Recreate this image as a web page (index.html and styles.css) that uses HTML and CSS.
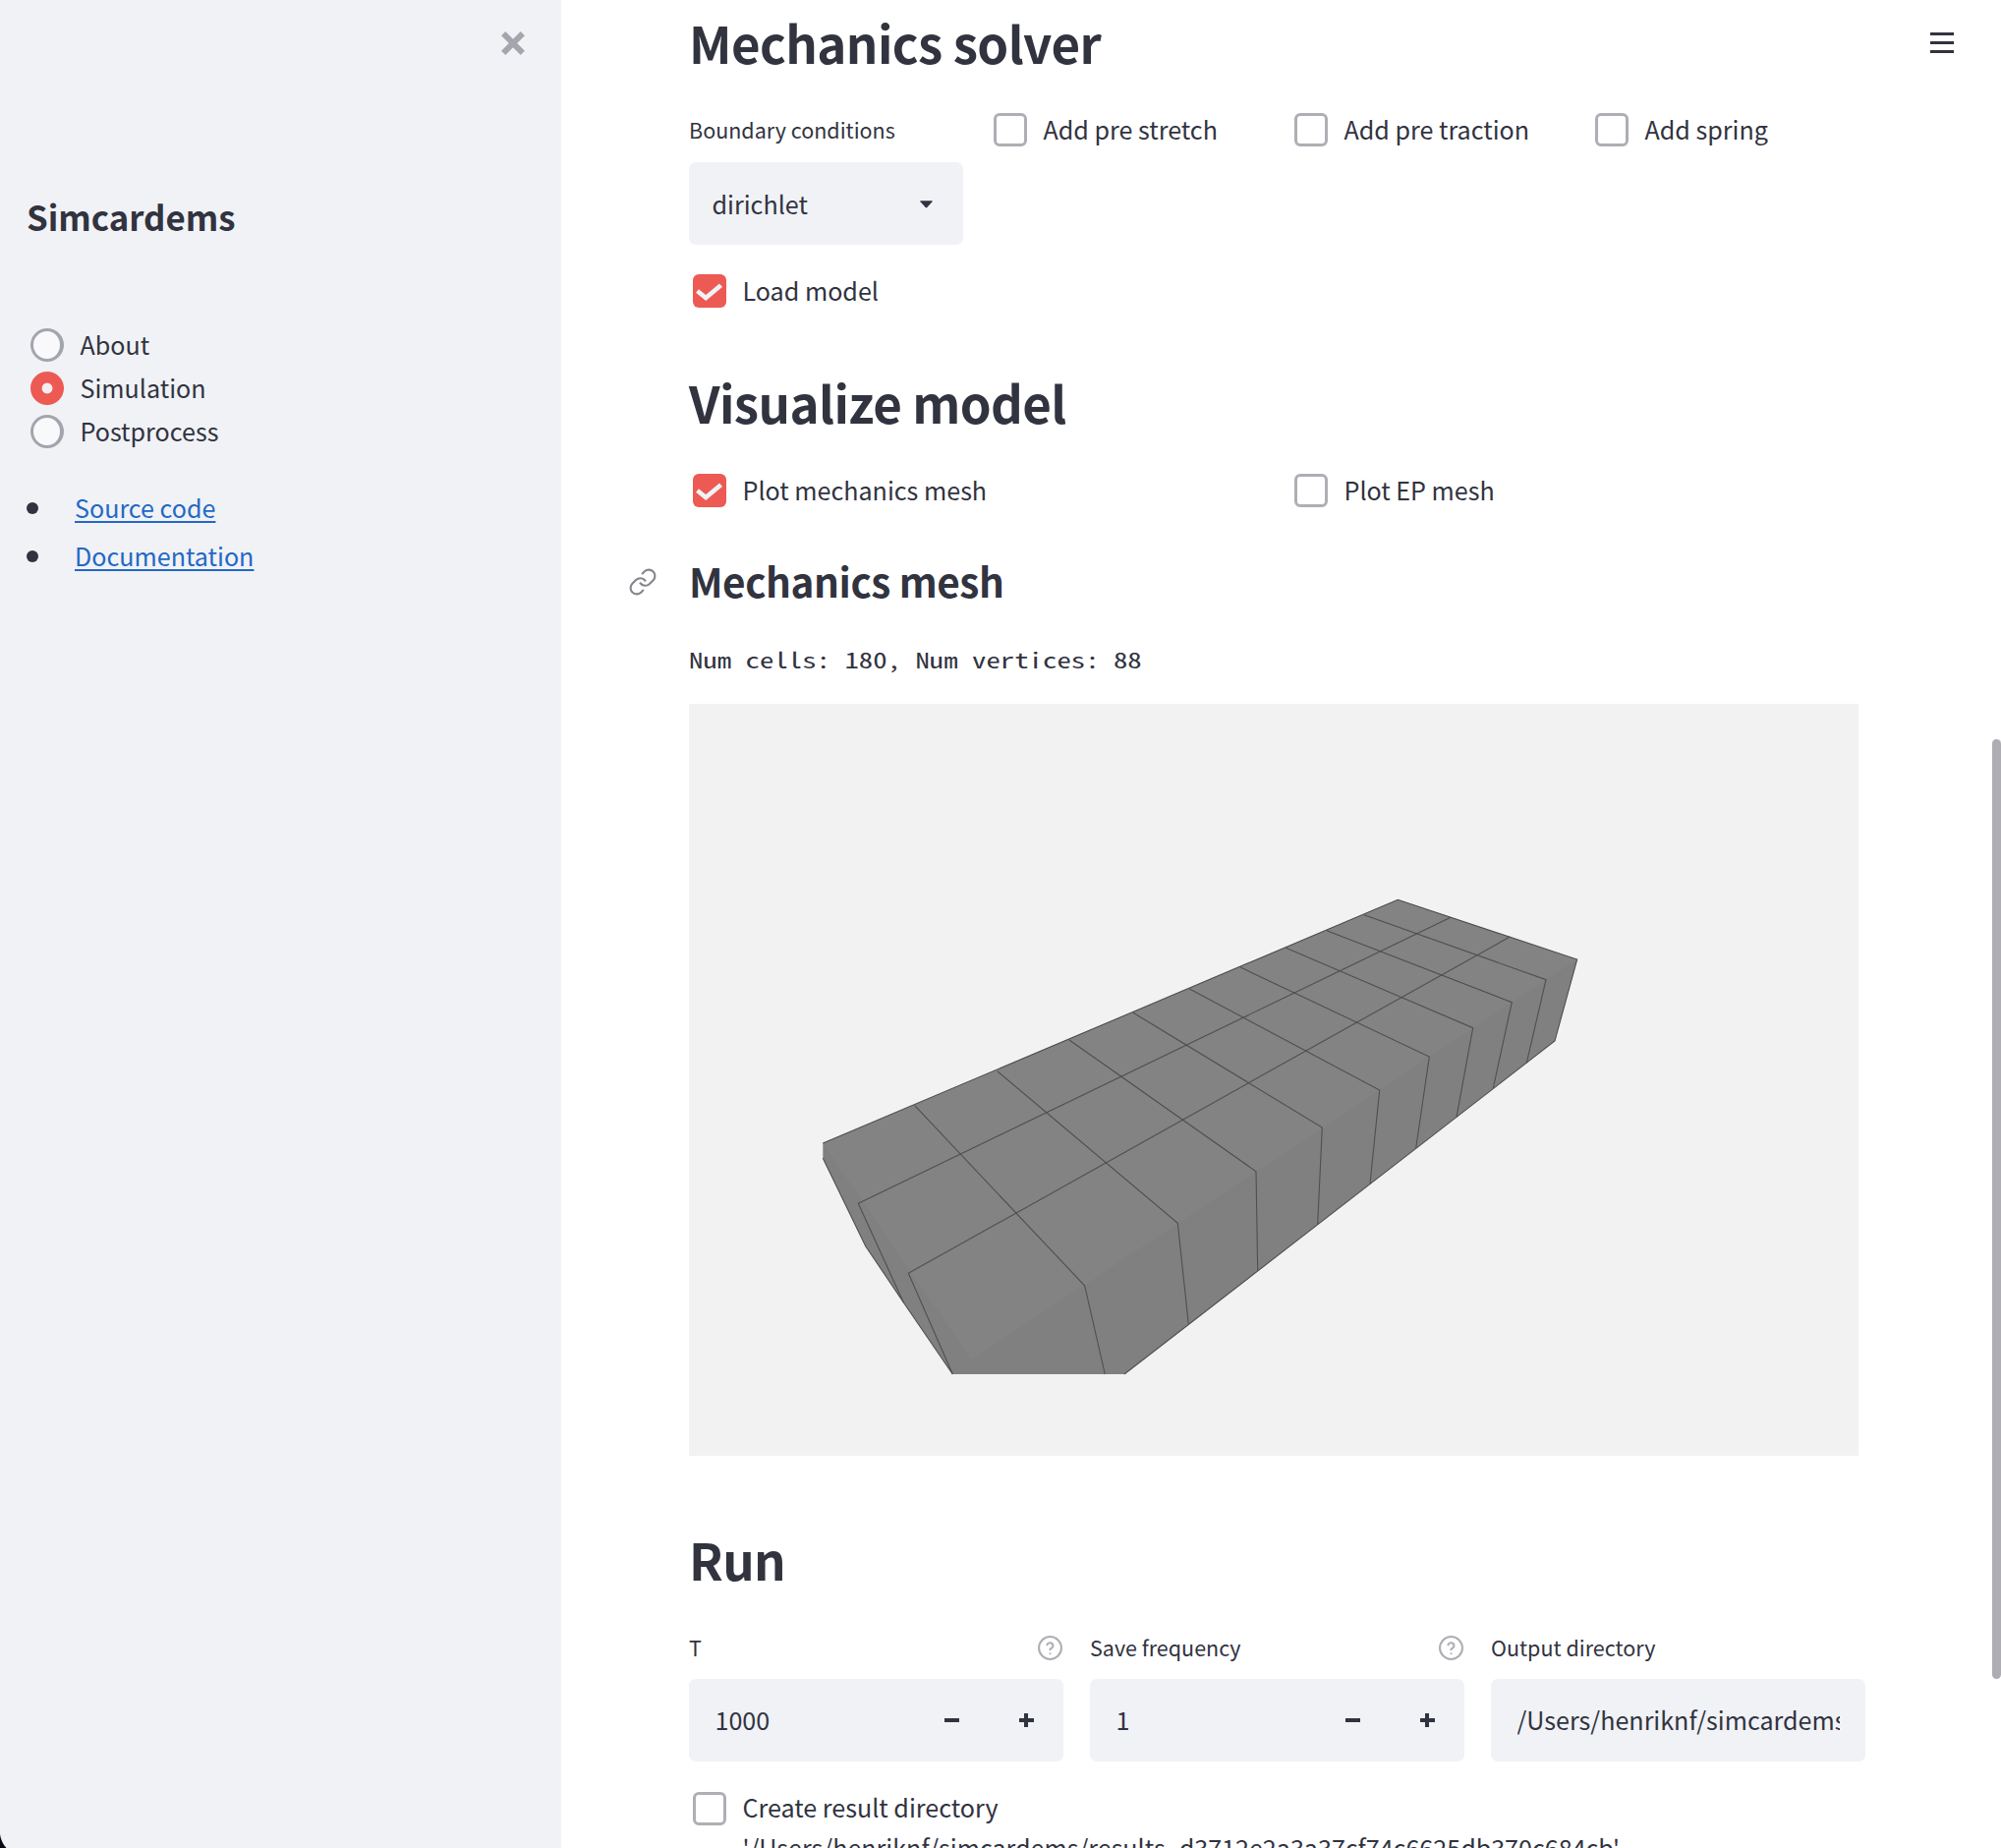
FILE: index.html
```html
<!DOCTYPE html>
<html lang="en">
<head>
<meta charset="utf-8">
<title>Simcardems</title>
<link rel="stylesheet" href="styles.css">
</head>
<body>
<div class="app">
  <aside class="sidebar">
    <button class="close" aria-label="Close"><svg width="24" height="24" viewBox="0 0 24 24"><path d="M2.2 2.2 21.8 21.8M21.8 2.2 2.2 21.8" stroke="#a5a6ad" stroke-width="6"/></svg></button>
    <h2 class="brand">Simcardems</h2>
    <div class="radios">
      <label class="radio"><span class="ring"></span><span>About</span></label>
      <label class="radio"><span class="ring on"></span><span>Simulation</span></label>
      <label class="radio"><span class="ring"></span><span>Postprocess</span></label>
    </div>
    <ul class="links">
      <li><a>Source code</a></li>
      <li><a>Documentation</a></li>
    </ul>
  </aside>

  <main class="main">
    <h1 class="first">Mechanics solver</h1>
    <div class="cols four">
      <div class="field">
        <div class="label">Boundary conditions</div>
        <div class="select"><span>dirichlet</span><svg width="13" height="8" viewBox="0 0 13 8"><path d="M.8.3h11.4c.5 0 .6.5.3.9L7.3 7c-.5.5-1.1.5-1.6 0L.5 1.2C.2.8.3.3.8.3z" fill="#31333f"/></svg></div>
      </div>
      <label class="check"><span class="box"></span><span>Add pre stretch</span></label>
      <label class="check"><span class="box"></span><span>Add pre traction</span></label>
      <label class="check"><span class="box"></span><span>Add spring</span></label>
    </div>
    <label class="check load"><span class="box on"><svg viewBox="0 0 34 34"><path d="M4.500 17 13.200 24 28.500 11.2" fill="none" stroke="#f0f2f6" stroke-width="4.6"/></svg></span><span>Load model</span></label>

    <h1 class="visualize">Visualize model</h1>
    <div class="cols two">
      <label class="check"><span class="box on"><svg viewBox="0 0 34 34"><path d="M4.500 17 13.200 24 28.500 11.2" fill="none" stroke="#f0f2f6" stroke-width="4.6"/></svg></span><span>Plot mechanics mesh</span></label>
      <label class="check"><span class="box"></span><span>Plot EP mesh</span></label>
    </div>

    <div class="subhead">
      <svg class="anchor" viewBox="0 0 24 24" fill="none" stroke="#85868d" stroke-width="1.7" stroke-linecap="round"><path d="M10 13a5 5 0 0 0 7.54.54l3-3a5 5 0 0 0-7.07-7.07l-1.72 1.71"/><path d="M14 11a5 5 0 0 0-7.54-.54l-3 3a5 5 0 0 0 7.07 7.07l1.71-1.71"/></svg>
      <h3>Mechanics mesh</h3>
    </div>
    <div class="mono">Num cells: 180, Num vertices: 88</div>

    <svg class="mesh" viewBox="701 716 1190 765">
      <path fill="#808080" d="M837.3 1163 1422.3 915.3 1604.7 976 1582 1059 1144 1398H969.3L919.3 1325 880.7 1267.7 837.3 1178.3z"/>
      <path fill="#838383" d="M837.3 1163 1422.3 915.3 1604.7 976 988.3 1383.3z"/>
      <g fill="none" stroke="#4f4f4f" stroke-width="1.1">
        <path d="M837.3 1163 1422.3 915.3 1604.7 976 1582 1059 1144 1398"/>
        <path d="M837.3 1178.3 880.7 1267.7 919.3 1325 969.3 1398"/>
        <path d="M919.3 1325 873.3 1224.3 1476 933.3M969.3 1398 924.3 1295.3 1536.3 953"/>
        <path d="M930.7 1124.7 1103.7 1308 1124.3 1398M1014.7 1089.7 1198.3 1244.3 1209.3 1347M1088 1058 1278 1191.7 1279.7 1292.3M1153 1030.3 1345.3 1147 1340.7 1245.3M1210.3 1006 1403.7 1109 1394 1204.3M1262 984 1454.3 1075 1440.7 1168M1308.3 964.3 1498.7 1045.7 1482 1136.3M1350 946.7 1538.3 1019.7 1519.3 1107M1388 930.7 1573 996.7 1553.3 1081.3"/>
      </g>
    </svg>

    <h1 class="run">Run</h1>
    <div class="cols three">
      <div class="field">
        <div class="label"><span>T</span><svg class="help" viewBox="0 0 24 24" fill="none" stroke="#aeafb5" stroke-width="2" stroke-linecap="round"><circle cx="12" cy="12" r="11"/><path d="M9 9a3 3 0 0 1 5.83 1c0 2-2.9 2.4-2.9 3.600M12 17.500h.01"/></svg></div>
        <div class="input"><span>1000</span><span class="steps"><i class="minus"></i><i class="plus"></i></span></div>
      </div>
      <div class="field">
        <div class="label"><span>Save frequency</span><svg class="help" viewBox="0 0 24 24" fill="none" stroke="#aeafb5" stroke-width="2" stroke-linecap="round"><circle cx="12" cy="12" r="11"/><path d="M9 9a3 3 0 0 1 5.83 1c0 2-2.9 2.4-2.9 3.600M12 17.500h.01"/></svg></div>
        <div class="input"><span>1</span><span class="steps"><i class="minus"></i><i class="plus"></i></span></div>
      </div>
      <div class="field">
        <div class="label"><span>Output directory</span></div>
        <div class="input"><span class="clip">/Users/henriknf/simcardems</span></div>
      </div>
    </div>
    <label class="check create"><span class="box"></span><span>Create result directory<br>'/Users/henriknf/simcardems/results_d3712e2a3a37cf74c6625db370c684cb'</span></label>
  </main>
  <svg class="menu" width="24" height="21" viewBox="0 0 24 21"><path d="M0 1.5h24M0 10.5h24M0 19.5h24" stroke="#31333f" stroke-width="2.8"/></svg>
  <div class="scrollbar"></div>
  <svg class="corner" width="7" height="14" viewBox="0 0 7 14"><path d="M0 0C.6 5 3 10.500 6.500 14H0z" fill="#0a0a14"/></svg>
</div>
</body>
</html>
```
FILE: styles.css
```css
* { box-sizing: border-box; }
body {
  margin: 0;
  background: #fff;
  color: #31333f;
  font: 25.1px/32px "Noto Sans CJK JP", "Noto Sans CJK SC", sans-serif;
}
.app { position: relative; display: flex; width: 2036px; height: 1880px; overflow: hidden; }
h1, h2, h3 { margin: 0; font-weight: 700; white-space: nowrap; }

.sidebar { width: 571px; flex: none; background: #f0f2f6; padding: 32px 37px 0 27px; }
.close { display: block; margin-left: auto; width: 24px; height: 24px; padding: 0; border: 0; background: none; }
.close svg { display: block; }
.brand { margin-top: 142px; font-size: 34.8px; line-height: 44px; }
.radios { display: flex; flex-direction: column; gap: 10px; margin: 92px 0 0 4px; }
.radio { display: flex; gap: 16.5px; height: 34px; line-height: 33px; }
.ring { width: 34px; height: 34px; border: 3px solid #a3a5ad; border-right-width: 4px; border-radius: 50%; background: #f9f9fc; }
.ring.on { border: 0; background: radial-gradient(circle, #f5eef1 5px, #ed5a53 5.8px); }
.links { list-style: none; margin: 35px 0 0; padding: 0; }
.links li { display: flex; align-items: center; height: 49px; }
.links li::before { content: ""; width: 12px; height: 12px; margin: 2px 37px 0 0; border-radius: 50%; background: #31333f; }
.links a { color: #2468c4; text-decoration: underline; text-decoration-thickness: 2px; text-underline-offset: 3px; }

.main { width: 1327px; flex: none; padding-left: 130px; white-space: nowrap; }
h1 { font-size: 51px; line-height: 60px; letter-spacing: -0.6px; }
.first { margin-top: 13px; }
.cols { display: grid; column-gap: 27px; }
.four { grid-template-columns: repeat(4, 279px); margin-top: 42px; height: 134px; }
.two { grid-template-columns: repeat(2, 585px); margin-top: 43px; }
.three { grid-template-columns: repeat(3, 381px); margin-top: 44px; }
.label { display: flex; justify-content: space-between; align-items: center; font-size: 21.5px; height: 32px; }
.four .label { height: 34px; }
.select { display: flex; align-items: center; justify-content: space-between; height: 84px; margin-top: 16px; padding: 0 31px 1px 23.5px; border-radius: 7px; background: #f0f2f6; }
.select svg { margin-top: 3px; }
.check { display: flex; gap: 16.5px; padding-left: 4px; height: 34px; }
.box { width: 34px; height: 34px; flex: none; border: 3px solid #aeafb5; border-radius: 6px; }
.box.on { border: 0; background: #ed5a53; }
.box svg { display: block; }
.load { margin-top: 30px; }
.visualize { margin-top: 66px; }
.subhead { display: flex; align-items: center; margin: 51px 0 0 -62px; height: 48px; }
.anchor { width: 30px; height: 30px; margin: 2px 32px 0 0; }
h3 { font-size: 40.5px; line-height: 48px; letter-spacing: -0.45px; }
.mono {
  width: 360px;
  margin-top: 39px;
  font: 22px/32px "Noto Sans Mono CJK JP", "Liberation Mono", monospace;
  transform: scaleX(1.309);
  transform-origin: left;
}
.mesh { display: block; width: 1190px; height: 765px; margin-top: 30px; background: #f2f2f2; }
.run { margin-top: 75px; }
.help { width: 25px; height: 25px; margin-right: 1px; }
.input { display: flex; align-items: center; justify-content: space-between; height: 84px; margin-top: 16px; padding: 0 26.5px 2px; border-radius: 7px; background: #f0f2f6; }
.clip { overflow: hidden; width: 328px; }
.steps { display: flex; gap: 61px; padding: 2px 4px 0 0; }
.steps i { width: 15px; height: 14px; background: linear-gradient(#31333f, #31333f) center / 15px 4px no-repeat; }
.steps .plus { background: linear-gradient(#31333f, #31333f) center / 15px 4px no-repeat, linear-gradient(#31333f, #31333f) center / 4px 14px no-repeat; }
.create { margin-top: 31px; line-height: 41px; }
.create > span:last-child { margin-top: -5px; }

.menu { position: absolute; left: 1964px; top: 33px; }
.scrollbar { position: absolute; right: 0; top: 752px; width: 9px; height: 956px; border-radius: 5px; background: #aeadb3; }
.corner { position: absolute; left: 0; bottom: 0; }
```
